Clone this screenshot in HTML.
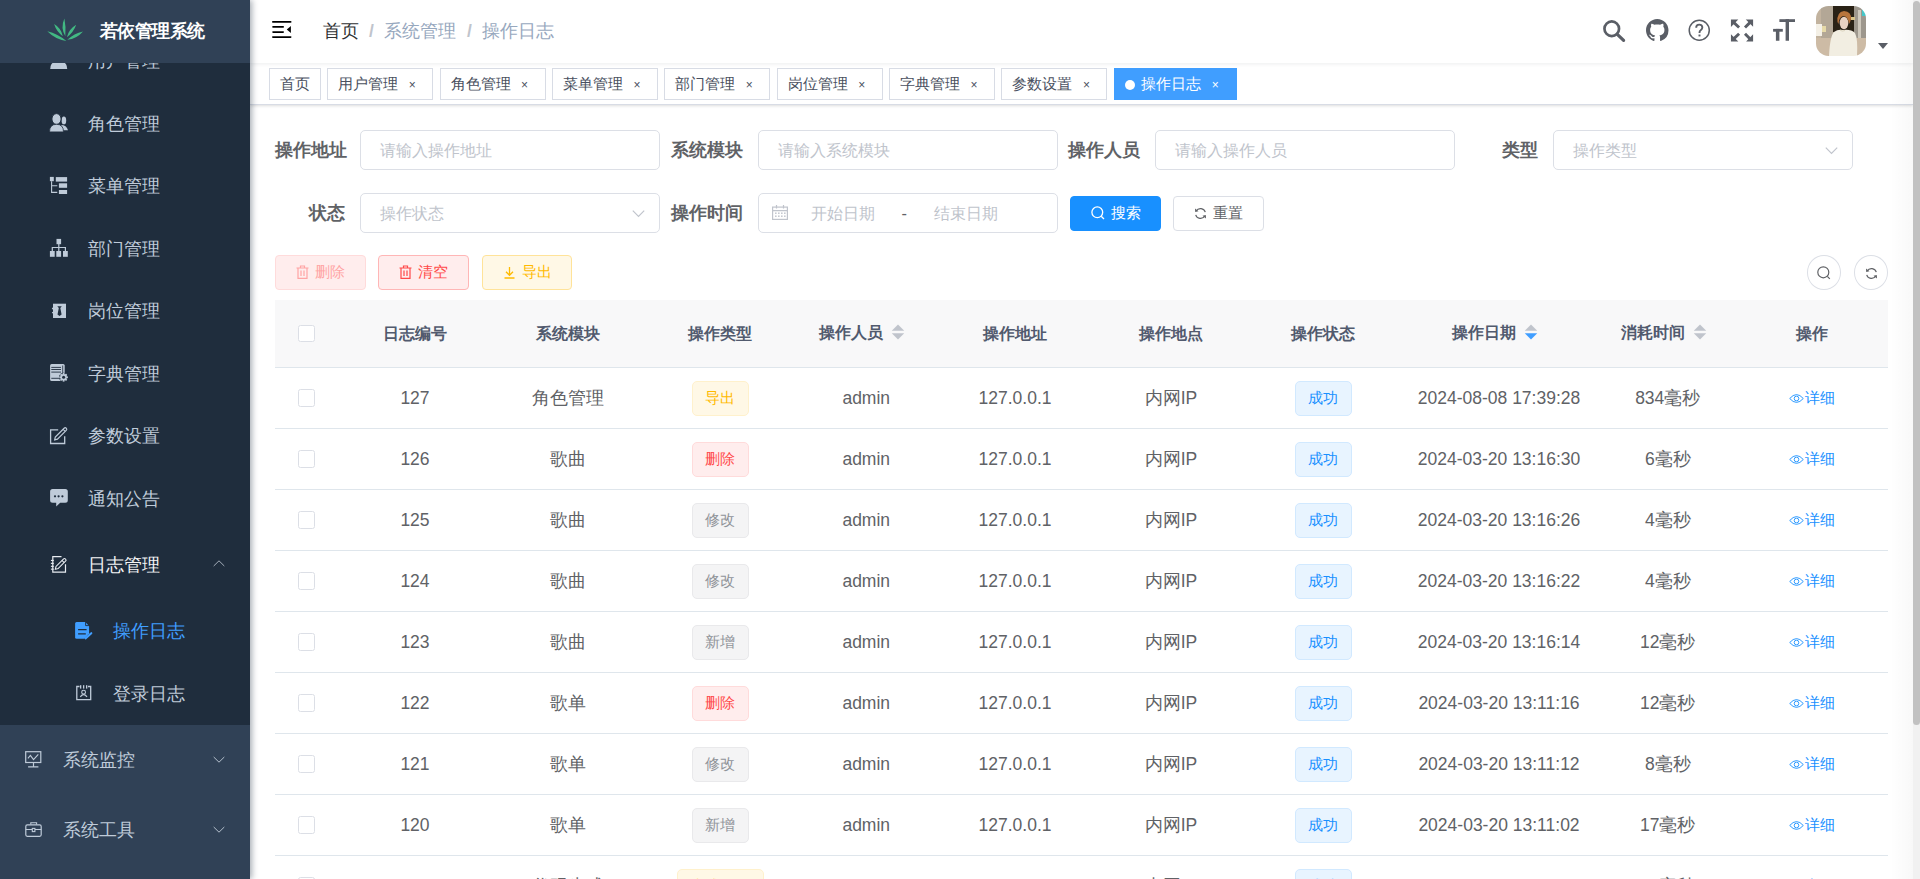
<!DOCTYPE html>
<html><head><meta charset="utf-8">
<style>
*{box-sizing:border-box;margin:0;padding:0}
html,body{width:1920px;height:879px;overflow:hidden;background:#fff;font-family:"Liberation Sans",sans-serif;}
.sidebar{position:absolute;left:0;top:0;width:250px;height:879px;background:#304156;overflow:hidden;z-index:5;box-shadow:2px 0 6px rgba(0,21,41,.35)}
.menu{position:absolute;left:0;top:30px;width:250px}
.sub{background:#1f2d3d}
.mi{position:relative;height:62.5px;display:flex;align-items:center;color:#bfcbd9;font-size:17.5px;white-space:nowrap}
.mi.t{height:70px}

.mi .arr{position:absolute;right:25px;top:50%;width:15px;height:15px;margin-top:-8px}
.l1{padding-left:62.5px}.l2{padding-left:87.5px}.l3{padding-left:112.5px}
.ic{position:absolute}
.logo{position:absolute;left:0;top:0;width:250px;height:62.5px;background:#304156;z-index:2}
.logo .t{position:absolute;left:100px;top:0;line-height:62.5px;color:#fff;font-weight:bold;font-size:17.5px;letter-spacing:-0.6px}
.main{position:absolute;left:250px;top:0;width:1663px;height:879px}
.navbar{position:absolute;left:0;top:0;width:1663px;height:62.5px;background:#fff;box-shadow:0 1px 4px rgba(0,21,41,.08);z-index:3}
.tags{position:absolute;left:0;top:62.5px;width:1663px;height:42.5px;background:#fff;border-bottom:1px solid #d8dce5;box-shadow:0 1px 3px 0 rgba(0,0,0,.12),0 0 3px 0 rgba(0,0,0,.04);z-index:2;white-space:nowrap}
.tag{display:inline-block;position:relative;height:32.5px;line-height:30.5px;border:1px solid #d8dce5;color:#495060;background:#fff;padding:0 10px;font-size:15px;margin-left:6.4px;margin-top:5px;vertical-align:top}
.tag:first-child{margin-left:18.75px}
.tag .x{display:inline-block;width:20px;text-align:center;font-size:12px;margin-left:4px;color:#495060;vertical-align:0}
.tag.active{background:#409eff;border-color:#409eff;color:#fff;padding-right:11px}
.tag.active .x{color:#fff}
.tag.active:before{content:'';display:inline-block;width:10px;height:10px;border-radius:50%;background:#fff;margin-right:6.5px;vertical-align:-1px}
.bc{position:absolute;left:72.5px;top:0;line-height:62.5px;font-size:17.5px;color:#97a8be;white-space:nowrap}
.bc .sep{margin:0 10.5px;color:#c0c4cc;font-weight:bold}
.ri{position:absolute;top:19px;width:22.5px;height:22.5px}
.av{position:absolute;left:1566px;top:5.8px;width:50px;height:50px;border-radius:12.5px;overflow:hidden}
.lbl{position:absolute;height:40px;line-height:40px;font-size:17.5px;font-weight:bold;color:#606266;text-align:right;white-space:nowrap}
.inp{position:absolute;height:40px;width:300px;border:1px solid #dcdfe6;border-radius:5px;background:#fff;font-size:16.25px;line-height:38px;color:#c0c4cc;padding-left:19px;white-space:nowrap}
.chev{position:absolute;right:13px;top:12px;width:15px;height:15px}
.btn{position:absolute;height:34.5px;border-radius:4px;font-size:15px;line-height:32.5px;text-align:center;white-space:nowrap;border:1px solid}
.btn svg{display:inline-block;vertical-align:middle;margin-right:6px;position:relative;top:-1px}
.cb{position:absolute;width:42px;height:34.5px;border-radius:50%;border:1px solid #dcdfe6;background:#fff}
.tbl{position:absolute;left:25px;top:300px;width:1612.5px}
.tr{position:relative;display:flex;height:61px;border-bottom:1px solid #dfe6ec;align-items:center}
.th{height:68px;background:#f8f8f9;color:#515a6e;font-weight:bold;font-size:16.25px}
.c{flex:none;text-align:center;white-space:nowrap;overflow:visible}
.td{color:#606266;font-size:17.5px}
.chk{display:inline-block;width:17.5px;height:17.5px;border:1px solid #dcdfe6;border-radius:2.5px;background:#fff;vertical-align:middle;position:relative;top:-1px}
.tg{display:inline-block;height:35px;line-height:31px;padding:0 12.5px;font-size:15px;border:1px solid;border-radius:5px}
.tg.w{background:#fff8e6;border-color:#fff1cc;color:#ffba00}
.tg.d{background:#ffeded;border-color:#ffdbdb;color:#ff4949}
.tg.i{background:#f4f4f5;border-color:#e9e9eb;color:#909399}
.tg.p{background:#e8f4ff;border-color:#d1e9ff;color:#1890ff}
.lk{color:#1890ff;font-size:15px;position:relative;top:-1px}
.sort{display:inline-block;width:30px;height:42.5px;vertical-align:middle}
.app{position:absolute;left:0;top:0;width:1663px;height:879px}
.shade{position:absolute;left:1890px;top:0;width:23px;height:879px;background:linear-gradient(to right,rgba(0,0,0,0),rgba(0,0,0,.028));z-index:9}
.sbar{position:absolute;left:1913px;top:0;width:7px;height:879px;background:#f1f1f1;z-index:10}
.sbar i{position:absolute;left:0;top:1px;width:7px;height:724px;border-radius:4px;background:#c1c1c1}
</style></head>
<body>
<div class="sidebar">
  <div class="menu">
    <div class="sub">
      <div class="mi l2">用户管理</div>
      <div class="mi l2">角色管理</div>
      <div class="mi l2">菜单管理</div>
      <div class="mi l2">部门管理</div>
      <div class="mi l2">岗位管理</div>
      <div class="mi l2">字典管理</div>
      <div class="mi l2">参数设置</div>
      <div class="mi l2">通知公告</div>
      <div class="mi t l2" style="color:#f4f4f5">日志管理</div>
      <div class="mi l3" style="color:#409eff">操作日志</div>
      <div class="mi l3">登录日志</div>
    </div>
    <div class="mi t l1">系统监控</div>
    <div class="mi t l1">系统工具</div>
  </div>
  <svg class="ic" style="left:40px;top:46px" width="28" height="28" viewBox="0 0 28 28"><circle cx="18.7" cy="10" r="4.5" fill="#bfcbd9"/><path d="M10.2 23 Q10.6 16.5 14 16.5 H23.4 Q26.8 16.5 27.2 23 Z" fill="#bfcbd9"/></svg>
  <svg class="ic" style="left:45px;top:108px" width="28" height="28" viewBox="0 0 28 28"><ellipse cx="18.9" cy="12.4" rx="2.3" ry="3.9" fill="#bfcbd9"/><path d="M16 17 Q21.5 17 23 22.3 L18 22.3Z" fill="#bfcbd9"/><ellipse cx="11.5" cy="11" rx="4.6" ry="5.4" fill="#bfcbd9" stroke="#1f2d3d" stroke-width="1"/><path d="M4.5 23.9 Q4.5 16.3 11.5 16.3 Q18.5 16.3 18.5 23.9 Z" fill="#bfcbd9" stroke="#1f2d3d" stroke-width="0.8"/></svg>
  <svg class="ic" style="left:45px;top:172px" width="28" height="28" viewBox="0 0 28 28"><g fill="#bfcbd9"><rect x="4.9" y="4.9" width="3.9" height="4.3"/><rect x="10.8" y="5.1" width="11.3" height="4.5"/><rect x="13.9" y="11.3" width="8.2" height="4.5"/><rect x="13.9" y="18" width="8.2" height="4"/></g><path d="M6.6 9.2 V20.4 H12.3 M6.6 13.7 H12.3" fill="none" stroke="#bfcbd9" stroke-width="1.1"/></svg>
  <svg class="ic" style="left:45px;top:234px" width="28" height="28" viewBox="0 0 28 28"><g fill="#bfcbd9"><rect x="11.5" y="4.9" width="4.6" height="5.3"/><rect x="4.9" y="17" width="4.8" height="5.8"/><rect x="11.3" y="17" width="4.8" height="5.8"/><rect x="18" y="17" width="4.8" height="5.8"/></g><path d="M13.8 10 V17 M7.3 17.2 V13.5 H20.4 V17.2" fill="none" stroke="#bfcbd9" stroke-width="1.2"/></svg>
  <svg class="ic" style="left:45px;top:297px" width="28" height="28" viewBox="0 0 28 28"><rect x="8" y="6.7" width="13" height="14.3" fill="#bfcbd9"/><g fill="#bfcbd9"><ellipse cx="8.3" cy="11.5" rx="1.4" ry="0.9"/><ellipse cx="8.3" cy="15.6" rx="1.4" ry="0.9"/></g><path d="M12.3 9.2 H16.8 L15.3 11 L16.6 17.4 L14.5 18.9 L12.5 17.4 L13.8 11Z" fill="#1f2d3d"/></svg>
  <svg class="ic" style="left:45px;top:359px" width="28" height="28" viewBox="0 0 28 28"><rect x="5.1" y="5.1" width="14.6" height="16.9" rx="1.5" fill="#bfcbd9"/><path d="M17.7 6.5 V15" stroke="#1f2d3d" stroke-width="0.8"/><g stroke="#1f2d3d" stroke-width="0.9"><path d="M6.3 8.4 H16 M6.3 10.5 H16 M6.3 13.1 H16 M6.3 19.3 H15"/></g><g transform="translate(18.6 18.3)"><circle r="4.6" fill="#1f2d3d"/><circle r="3.2" fill="#bfcbd9"/><g fill="#bfcbd9"><rect x="-0.9" y="-4.3" width="1.8" height="1.8" transform="rotate(0)"/><rect x="-0.9" y="-4.3" width="1.8" height="1.8" transform="rotate(45)"/><rect x="-0.9" y="-4.3" width="1.8" height="1.8" transform="rotate(90)"/><rect x="-0.9" y="-4.3" width="1.8" height="1.8" transform="rotate(135)"/><rect x="-0.9" y="-4.3" width="1.8" height="1.8" transform="rotate(180)"/><rect x="-0.9" y="-4.3" width="1.8" height="1.8" transform="rotate(225)"/><rect x="-0.9" y="-4.3" width="1.8" height="1.8" transform="rotate(270)"/><rect x="-0.9" y="-4.3" width="1.8" height="1.8" transform="rotate(315)"/></g><circle r="1.5" fill="#1f2d3d"/></g></svg>
  <svg class="ic" style="left:45px;top:421px" width="28" height="28" viewBox="0 0 28 28"><path d="M13.2 8.9 H5.6 V22.5 H19.7 V15.3" fill="none" stroke="#bfcbd9" stroke-width="1.3"/><g transform="translate(15.6 12.9) rotate(-45)"><path d="M-8.4 0 L-6 -1.5 H6.5 Q8 -1.5 8 0 Q8 1.5 6.5 1.5 H-6Z" fill="none" stroke="#bfcbd9" stroke-width="1.2"/><path d="M5 -1.5 V1.5" stroke="#bfcbd9" stroke-width="1"/></g></svg>
  <svg class="ic" style="left:45px;top:484px" width="28" height="28" viewBox="0 0 28 28"><path d="M7.6 5.1 H20.3 Q22.8 5.1 22.8 7.6 V16.3 Q22.8 18.8 20.3 18.8 H15.2 L11.2 22.6 L11.2 18.8 H7.6 Q5.1 18.8 5.1 16.3 V7.6 Q5.1 5.1 7.6 5.1Z" fill="#bfcbd9"/><g fill="#1f2d3d"><circle cx="10" cy="12.3" r="1.1"/><circle cx="13.6" cy="12.3" r="1.1"/><circle cx="17.4" cy="12.3" r="1.1"/></g></svg>
  <svg class="ic" style="left:45px;top:551px" width="28" height="28" viewBox="0 0 28 28"><path d="M16.5 5.6 H7.8 V21.1 H20.5 V13.2" fill="none" stroke="#e8ecf1" stroke-width="1.2"/><g fill="#e8ecf1"><rect x="5.9" y="8.9" width="2.9" height="1.1"/><rect x="5.9" y="11.8" width="2.9" height="1.1"/><rect x="5.9" y="14.8" width="2.9" height="1.1"/><rect x="5.9" y="17.6" width="2.9" height="1.1"/></g><g transform="translate(15.6 13) rotate(-45)"><path d="M-7.4 0 L-5 -1.5 H5.8 Q7 -1.5 7 0 Q7 1.5 5.8 1.5 H-5Z" fill="none" stroke="#e8ecf1" stroke-width="1.1"/><path d="M3.5 -1.5 V1.5" stroke="#e8ecf1" stroke-width="1"/></g></svg>
  <svg class="ic" style="left:70px;top:617px" width="28" height="28" viewBox="0 0 28 28"><path d="M6.6 5.1 H15.3 L19.1 8.9 V16.5 L14.2 21.7 H6.6 Q5.1 21.7 5.1 20.2 V6.6 Q5.1 5.1 6.6 5.1Z" fill="#409eff"/><path d="M15.6 5.1 V8.6 H19.1" fill="none" stroke="#1f2d3d" stroke-width="0.9"/><path d="M8.1 12.6 H16.6 M8.1 16.9 H15.8" stroke="#1f2d3d" stroke-width="1.3"/><path d="M15.5 21.4 L21.3 16.2" stroke="#409eff" stroke-width="2.1" stroke-linecap="round"/></svg>
  <svg class="ic" style="left:70px;top:679px" width="28" height="28" viewBox="0 0 28 28"><path d="M9.5 7.5 H6.8 V20.7 H20.7 V7.5 H18" fill="none" stroke="#bfcbd9" stroke-width="1.3"/><g fill="#bfcbd9"><rect x="10" y="6.2" width="1.3" height="3.4"/><rect x="13" y="6.2" width="1.3" height="3.4"/><rect x="16" y="6.2" width="1.3" height="3.4"/></g><circle cx="13.6" cy="13.2" r="1.9" fill="none" stroke="#bfcbd9" stroke-width="1.1"/><path d="M10.3 17.8 Q13.6 13.4 17 17.8" fill="none" stroke="#bfcbd9" stroke-width="1.2"/></svg>
  <svg class="ic" style="left:20px;top:746px" width="28" height="28" viewBox="0 0 28 28"><rect x="5.7" y="5.7" width="15.1" height="10.8" fill="none" stroke="#bfcbd9" stroke-width="1.2"/><path d="M7.9 12.4 L10.4 9.4 L13.5 13.6 L18.3 8.3" fill="none" stroke="#bfcbd9" stroke-width="1.1"/><path d="M13.5 16.5 V20.4 M8.1 20.9 H18.4" fill="none" stroke="#bfcbd9" stroke-width="1.2"/></svg>
  <svg class="ic" style="left:20px;top:816px" width="28" height="28" viewBox="0 0 28 28"><rect x="5.8" y="8.9" width="15.4" height="11.4" rx="1.5" fill="none" stroke="#bfcbd9" stroke-width="1.2"/><path d="M10.8 8.6 V6.8 H16.6 V8.6 M5.8 13.5 H12 M15 13.5 H21.2" fill="none" stroke="#bfcbd9" stroke-width="1.1"/><rect x="12.3" y="12.4" width="2.6" height="3.2" fill="none" stroke="#bfcbd9" stroke-width="1.1"/></svg>
  <svg class="ic" style="left:212.5px;top:560px" width="12" height="7" viewBox="0 0 12 7"><path d="M0.7 6 L6 0.8 L11.3 6" fill="none" stroke="#a3adb9" stroke-width="1"/></svg>
  <svg class="ic" style="left:212.5px;top:755.5px" width="12" height="7" viewBox="0 0 12 7"><path d="M0.7 1 L6 6.2 L11.3 1" fill="none" stroke="#b5c0cd" stroke-width="1"/></svg>
  <svg class="ic" style="left:212.5px;top:825.5px" width="12" height="7" viewBox="0 0 12 7"><path d="M0.7 1 L6 6.2 L11.3 1" fill="none" stroke="#b5c0cd" stroke-width="1"/></svg>
  <div class="logo"><svg style="position:absolute;left:40px;top:10px" width="60" height="40" viewBox="0 0 60 40"><path d="M7.3 21.2 Q15.2 29.3 26.4 30.9 Q17.9 23.9 7.3 21.2Z M14.1 14.1 Q16.4 21.6 22.8 26.2 Q21.1 18.2 14.1 14.1Z M24.4 8.4 Q20.3 17.5 25.3 26.2 Q26.2 17.2 24.4 8.4Z M36.2 14.8 Q28.9 19.0 26.9 27.2 Q33.5 22.5 36.2 14.8Z M43.0 21.4 Q34.0 23.4 27.3 29.8 Q36.8 28.7 43.0 21.4Z" fill="#42b983"/></svg><span class="t">若依管理系统</span></div>
</div>
<div class="main">
  <div class="navbar">
    <svg style="position:absolute;left:22px;top:21px" width="20" height="17" viewBox="0 0 20 17"><g fill="#000"><rect x="0" y="0.1" width="19.5" height="1.7" rx="0.8"/><rect x="0.2" y="5.1" width="11.8" height="1.7" rx="0.8"/><rect x="0.2" y="10.2" width="11.8" height="1.7" rx="0.8"/><rect x="0" y="15.2" width="19.5" height="1.7" rx="0.8"/><path d="M18.9 4.9 L14.8 8.4 L18.9 11.9 Z"/></g></svg>
    <div class="bc"><span style="color:#303133">首页</span><span class="sep">/</span><span>系统管理</span><span class="sep">/</span><span>操作日志</span></div>
    <div class="rm">
      <svg style="position:absolute;left:1353px;top:19px" width="24" height="24" viewBox="0 0 24 24"><circle cx="8.75" cy="9.75" r="7.3" fill="none" stroke="#5a5e66" stroke-width="2.7"/><path d="M14.3 15.3 L20.6 21.4" stroke="#5a5e66" stroke-width="3.2" stroke-linecap="round"/></svg>
      <svg class="ri" style="left:1396px" viewBox="0 0 16 16"><path fill="#5a5e66" d="M8 0C3.58 0 0 3.58 0 8c0 3.54 2.29 6.53 5.47 7.59.4.07.55-.17.55-.38 0-.19-.01-.82-.01-1.49-2.01.37-2.53-.49-2.69-.94-.09-.23-.48-.94-.82-1.13-.28-.15-.68-.52-.01-.53.63-.01 1.08.58 1.23.82.72 1.21 1.87.87 2.33.66.07-.52.28-.87.51-1.07-1.78-.2-3.64-.89-3.64-3.95 0-.87.31-1.59.82-2.15-.08-.2-.36-1.02.08-2.12 0 0 .67-.21 2.2.82.64-.18 1.32-.27 2-.27.68 0 1.36.09 2 .27 1.53-1.04 2.2-.82 2.2-.82.44 1.1.16 1.92.08 2.12.51.56.82 1.27.82 2.15 0 3.07-1.87 3.75-3.65 3.95.29.25.54.73.54 1.48 0 1.07-.01 1.93-.01 2.2 0 .21.15.46.55.38A8.013 8.013 0 0016 8c0-4.42-3.58-8-8-8z"/></svg>
      <svg class="ri" style="left:1438px" viewBox="0 0 24 24"><circle cx="12" cy="12" r="10.7" fill="none" stroke="#5a5e66" stroke-width="1.6"/><path d="M8.7 9.3c0-2 1.4-3.3 3.3-3.3s3.3 1.3 3.3 3.1c0 1.5-.9 2.2-1.8 2.9-.9.6-1.2 1.1-1.2 2.2v.8" fill="none" stroke="#5a5e66" stroke-width="2"/><rect x="11.2" y="16.6" width="2.1" height="2" fill="#5a5e66"/></svg>
      <svg style="position:absolute;left:1480px;top:18.5px" width="24" height="24" viewBox="0 0 24 24"><g fill="#5a5e66"><path d="M0.94 0.38 H8.3 L0.94 8.1Z M23.1 0.38 H15.75 L23.1 7.75Z M0.94 22.6 V15.2 L8.3 22.6Z M23.1 22.6 V15.2 L16.1 22.6Z"/></g><g stroke="#5a5e66" stroke-width="2.9"><path d="M3.1 2.9 L9.1 8.5 M15 8.5 L20.6 2.9 M9.1 14.75 L3.1 20.4 M15 14.75 L20.6 20.4"/></g></svg>
      <svg style="position:absolute;left:1520px;top:18px" width="28" height="24" viewBox="0 0 28 24"><g fill="#5a5e66"><rect x="3.1" y="10.9" width="9.7" height="2.8"/><rect x="5.9" y="10.9" width="3.5" height="11.85"/><rect x="9.4" y="1.2" width="15.6" height="2.8"/><rect x="15.6" y="1.2" width="3.4" height="21.55"/></g></svg>
      <div class="av"><svg width="50" height="50" viewBox="0 0 50 50"><defs><filter id="bl" x="-10%" y="-10%" width="120%" height="120%"><feGaussianBlur stdDeviation="0.7"/></filter></defs><g filter="url(#bl)">
<rect x="-2" y="-2" width="54" height="54" fill="#c2b39f"/>
<rect x="5" y="0" width="13" height="32" fill="#b3a796"/>
<rect x="17" y="-2" width="24" height="28" fill="#2b2219"/>
<rect x="38" y="0" width="14" height="36" fill="#9d978d"/>
<rect x="42" y="4" width="3" height="30" fill="#cfc9bd"/>
<rect x="46" y="3" width="4" height="7" fill="#47c6c8"/>
<rect x="0" y="18" width="6" height="12" fill="#f4f0e6"/>
<rect x="6" y="20" width="4" height="6" fill="#e6d9a8"/>
<rect x="-2" y="32" width="54" height="20" fill="#cdbba5"/>
<rect x="35" y="11" width="4" height="3" fill="#d8c48a"/>
<ellipse cx="28" cy="17" rx="4.3" ry="6.2" fill="#e9d2c3"/>
<path d="M21.5 16 Q20.5 6 28 5 Q35.5 5.5 35 13 Q34 17 33 18 Q32 10 27 10 Q23 11 22.5 18Z" fill="#b8743c"/>
<path d="M13 50 Q14 30 18 26 Q22 23 27 24 Q35 23 39 27 Q42 33 41 50Z" fill="#f2eee2"/>
<path d="M24 24 Q26 26 29 24.5" fill="none" stroke="#ddd5c0" stroke-width="1"/>
</g></svg></div>
      <svg style="position:absolute;left:1628px;top:43px" width="10" height="6" viewBox="0 0 10 6"><path d="M0 0 H10 L5 6Z" fill="#5a5e66"/></svg>
    </div>
  </div>
  <div class="tags"><span class="tag">首页</span><span class="tag">用户管理<span class="x">×</span></span><span class="tag">角色管理<span class="x">×</span></span><span class="tag">菜单管理<span class="x">×</span></span><span class="tag">部门管理<span class="x">×</span></span><span class="tag">岗位管理<span class="x">×</span></span><span class="tag">字典管理<span class="x">×</span></span><span class="tag">参数设置<span class="x">×</span></span><span class="tag active">操作日志<span class="x">×</span></span></div>
  <div class="app">
  <div class="lbl" style="left:25px;top:130px;width:70px">操作地址</div>
  <div class="inp" style="left:110px;top:130px">请输入操作地址</div>
  <div class="lbl" style="left:410px;top:130px;width:82.5px">系统模块</div>
  <div class="inp" style="left:507.5px;top:130px">请输入系统模块</div>
  <div class="lbl" style="left:807.5px;top:130px;width:82.5px">操作人员</div>
  <div class="inp" style="left:905px;top:130px">请输入操作人员</div>
  <div class="lbl" style="left:1205px;top:130px;width:82.5px">类型</div>
  <div class="inp" style="left:1302.5px;top:130px">操作类型<svg class="chev" viewBox="0 0 15 15"><path d="M1.8 4.6 L7.5 10.3 L13.2 4.6" fill="none" stroke="#c0c4cc" stroke-width="1.2"/></svg></div>
  <div class="lbl" style="left:25px;top:192.5px;width:70px">状态</div>
  <div class="inp" style="left:110px;top:192.5px">操作状态<svg class="chev" viewBox="0 0 15 15"><path d="M1.8 4.6 L7.5 10.3 L13.2 4.6" fill="none" stroke="#c0c4cc" stroke-width="1.2"/></svg></div>
  <div class="lbl" style="left:410px;top:192.5px;width:82.5px">操作时间</div>
  <div class="inp" style="left:507.5px;top:192.5px;padding:0">
    <svg style="position:absolute;left:13px;top:11.5px" width="16" height="15" viewBox="0 0 16 15"><g fill="none" stroke="#c0c4cc" stroke-width="1.2"><rect x="0.6" y="2.1" width="14.8" height="12.3"/><path d="M0.6 5.6 H15.4 M4.5 0 V3.5 M11.5 0 V3.5"/></g><g fill="#c0c4cc"><rect x="3" y="7.5" width="1.6" height="1.4"/><rect x="6" y="7.5" width="1.6" height="1.4"/><rect x="9" y="7.5" width="1.6" height="1.4"/><rect x="12" y="7.5" width="1.6" height="1.4"/><rect x="3" y="10.5" width="1.6" height="1.4"/><rect x="6" y="10.5" width="1.6" height="1.4"/><rect x="9" y="10.5" width="1.6" height="1.4"/><rect x="12" y="10.5" width="1.6" height="1.4"/></g></svg>
    <span style="position:absolute;left:52px">开始日期</span><span style="position:absolute;left:143px;color:#606266">-</span><span style="position:absolute;left:175px">结束日期</span>
  </div>
  <div class="btn" style="left:820px;top:196px;width:91px;background:#1890ff;border-color:#1890ff;color:#fff"><svg width="14" height="14" viewBox="0 0 14 14"><circle cx="6.3" cy="6.3" r="5.4" fill="none" stroke="#fff" stroke-width="1.3"/><path d="M10.2 10.2 L13 13" stroke="#fff" stroke-width="1.3"/></svg>搜索</div>
  <div class="btn" style="left:923px;top:196px;width:90.5px;background:#fff;border-color:#dcdfe6;color:#606266"><svg width="13" height="13" viewBox="0 0 13 13"><path d="M11.3 5.2 A5 5 0 0 0 2.2 4" fill="none" stroke="#606266" stroke-width="1.2"/><path d="M1.7 7.8 A5 5 0 0 0 10.8 9" fill="none" stroke="#606266" stroke-width="1.2"/><path d="M1 1.5 L1.2 5 L4.5 4.3Z M12 11.5 L11.8 8 L8.5 8.7Z" fill="#606266"/></svg>重置</div>
  <div class="btn" style="left:25px;top:255px;width:91px;background:#ffeded;border-color:#ffdbdb;color:#ffa4a4"><svg width="13" height="14" viewBox="0 0 13 14"><g fill="none" stroke="#ffa4a4" stroke-width="1.2"><path d="M0.5 3 H12.5 M4.5 3 V1 H8.5 V3 M2 3 V13.4 H11 V3 M5 5.5 V11 M8 5.5 V11"/></g></svg>删除</div>
  <div class="btn" style="left:128px;top:255px;width:91px;background:#ffeded;border-color:#ffb6b6;color:#ff4949"><svg width="13" height="14" viewBox="0 0 13 14"><g fill="none" stroke="#ff4949" stroke-width="1.2"><path d="M0.5 3 H12.5 M4.5 3 V1 H8.5 V3 M2 3 V13.4 H11 V3 M5 5.5 V11 M8 5.5 V11"/></g></svg>清空</div>
  <div class="btn" style="left:232px;top:255px;width:90px;background:#fff8e6;border-color:#ffe399;color:#ffba00"><svg width="13" height="13" viewBox="0 0 13 13"><path d="M6.5 1 V9 M3 5.8 L6.5 9.3 L10 5.8 M1.5 12 H11.5" fill="none" stroke="#ffba00" stroke-width="1.3"/></svg>导出</div>
  <div class="cb" style="left:1557px;top:255px;width:34px;height:34.5px"><svg style="position:absolute;left:9px;top:10px" width="14" height="14" viewBox="0 0 14 14"><circle cx="6.3" cy="6.3" r="5.5" fill="none" stroke="#606266" stroke-width="1.2"/><path d="M10.3 10.3 L12.8 12.8" stroke="#606266" stroke-width="1.2"/></svg></div>
  <div class="cb" style="left:1604px;top:255px;width:34px;height:34.5px"><svg style="position:absolute;left:10px;top:10.5px" width="13" height="13" viewBox="0 0 13 13"><path d="M11.3 5.2 A5 5 0 0 0 2.2 4" fill="none" stroke="#606266" stroke-width="1.2"/><path d="M1.7 7.8 A5 5 0 0 0 10.8 9" fill="none" stroke="#606266" stroke-width="1.2"/><path d="M1 1.5 L1.2 5 L4.5 4.3Z M12 11.5 L11.8 8 L8.5 8.7Z" fill="#606266"/></svg></div>
  <div class="tbl"><div class="tr th"><div class="c" style="width:62.5px"><span class="chk"></span></div><div class="c" style="width:155px">日志编号</div><div class="c" style="width:150px">系统模块</div><div class="c" style="width:155px">操作类型</div><div class="c" style="width:137.5px">操作人员<svg class="sort" viewBox="0 0 30 42.5"><path d="M8.75 18.75 L15 12.5 L21.25 18.75Z" fill="#c0c4cc"/><path d="M8.75 21.25 L15 27.5 L21.25 21.25Z" fill="#c0c4cc"/></svg></div><div class="c" style="width:160px">操作地址</div><div class="c" style="width:152px">操作地点</div><div class="c" style="width:152px">操作状态</div><div class="c" style="width:200px">操作日期<svg class="sort" viewBox="0 0 30 42.5"><path d="M8.75 18.75 L15 12.5 L21.25 18.75Z" fill="#c0c4cc"/><path d="M8.75 21.25 L15 27.5 L21.25 21.25Z" fill="#409eff"/></svg></div><div class="c" style="width:137.5px">消耗时间<svg class="sort" viewBox="0 0 30 42.5"><path d="M8.75 18.75 L15 12.5 L21.25 18.75Z" fill="#c0c4cc"/><path d="M8.75 21.25 L15 27.5 L21.25 21.25Z" fill="#c0c4cc"/></svg></div><div class="c" style="width:151px">操作</div></div><div class="tr td"><div class="c" style="width:62.5px"><span class="chk"></span></div><div class="c" style="width:155px">127</div><div class="c" style="width:150px">角色管理</div><div class="c" style="width:155px"><span class="tg w">导出</span></div><div class="c" style="width:137.5px">admin</div><div class="c" style="width:160px">127.0.0.1</div><div class="c" style="width:152px">内网IP</div><div class="c" style="width:152px"><span class="tg p">成功</span></div><div class="c" style="width:200px">2024-08-08 17:39:28</div><div class="c" style="width:137.5px">834毫秒</div><div class="c" style="width:151px"><span class="lk"><svg width="15" height="11" viewBox="0 0 15 11" style="vertical-align:-1px;margin-right:1px"><path d="M0.7 5.5 Q7.5 -2.3 14.3 5.5 Q7.5 13.3 0.7 5.5Z" fill="none" stroke="#1890ff" stroke-width="0.9"/><circle cx="7.5" cy="5.5" r="2.3" fill="none" stroke="#1890ff" stroke-width="0.9"/></svg>详细</span></div></div><div class="tr td"><div class="c" style="width:62.5px"><span class="chk"></span></div><div class="c" style="width:155px">126</div><div class="c" style="width:150px">歌曲</div><div class="c" style="width:155px"><span class="tg d">删除</span></div><div class="c" style="width:137.5px">admin</div><div class="c" style="width:160px">127.0.0.1</div><div class="c" style="width:152px">内网IP</div><div class="c" style="width:152px"><span class="tg p">成功</span></div><div class="c" style="width:200px">2024-03-20 13:16:30</div><div class="c" style="width:137.5px">6毫秒</div><div class="c" style="width:151px"><span class="lk"><svg width="15" height="11" viewBox="0 0 15 11" style="vertical-align:-1px;margin-right:1px"><path d="M0.7 5.5 Q7.5 -2.3 14.3 5.5 Q7.5 13.3 0.7 5.5Z" fill="none" stroke="#1890ff" stroke-width="0.9"/><circle cx="7.5" cy="5.5" r="2.3" fill="none" stroke="#1890ff" stroke-width="0.9"/></svg>详细</span></div></div><div class="tr td"><div class="c" style="width:62.5px"><span class="chk"></span></div><div class="c" style="width:155px">125</div><div class="c" style="width:150px">歌曲</div><div class="c" style="width:155px"><span class="tg i">修改</span></div><div class="c" style="width:137.5px">admin</div><div class="c" style="width:160px">127.0.0.1</div><div class="c" style="width:152px">内网IP</div><div class="c" style="width:152px"><span class="tg p">成功</span></div><div class="c" style="width:200px">2024-03-20 13:16:26</div><div class="c" style="width:137.5px">4毫秒</div><div class="c" style="width:151px"><span class="lk"><svg width="15" height="11" viewBox="0 0 15 11" style="vertical-align:-1px;margin-right:1px"><path d="M0.7 5.5 Q7.5 -2.3 14.3 5.5 Q7.5 13.3 0.7 5.5Z" fill="none" stroke="#1890ff" stroke-width="0.9"/><circle cx="7.5" cy="5.5" r="2.3" fill="none" stroke="#1890ff" stroke-width="0.9"/></svg>详细</span></div></div><div class="tr td"><div class="c" style="width:62.5px"><span class="chk"></span></div><div class="c" style="width:155px">124</div><div class="c" style="width:150px">歌曲</div><div class="c" style="width:155px"><span class="tg i">修改</span></div><div class="c" style="width:137.5px">admin</div><div class="c" style="width:160px">127.0.0.1</div><div class="c" style="width:152px">内网IP</div><div class="c" style="width:152px"><span class="tg p">成功</span></div><div class="c" style="width:200px">2024-03-20 13:16:22</div><div class="c" style="width:137.5px">4毫秒</div><div class="c" style="width:151px"><span class="lk"><svg width="15" height="11" viewBox="0 0 15 11" style="vertical-align:-1px;margin-right:1px"><path d="M0.7 5.5 Q7.5 -2.3 14.3 5.5 Q7.5 13.3 0.7 5.5Z" fill="none" stroke="#1890ff" stroke-width="0.9"/><circle cx="7.5" cy="5.5" r="2.3" fill="none" stroke="#1890ff" stroke-width="0.9"/></svg>详细</span></div></div><div class="tr td"><div class="c" style="width:62.5px"><span class="chk"></span></div><div class="c" style="width:155px">123</div><div class="c" style="width:150px">歌曲</div><div class="c" style="width:155px"><span class="tg i">新增</span></div><div class="c" style="width:137.5px">admin</div><div class="c" style="width:160px">127.0.0.1</div><div class="c" style="width:152px">内网IP</div><div class="c" style="width:152px"><span class="tg p">成功</span></div><div class="c" style="width:200px">2024-03-20 13:16:14</div><div class="c" style="width:137.5px">12毫秒</div><div class="c" style="width:151px"><span class="lk"><svg width="15" height="11" viewBox="0 0 15 11" style="vertical-align:-1px;margin-right:1px"><path d="M0.7 5.5 Q7.5 -2.3 14.3 5.5 Q7.5 13.3 0.7 5.5Z" fill="none" stroke="#1890ff" stroke-width="0.9"/><circle cx="7.5" cy="5.5" r="2.3" fill="none" stroke="#1890ff" stroke-width="0.9"/></svg>详细</span></div></div><div class="tr td"><div class="c" style="width:62.5px"><span class="chk"></span></div><div class="c" style="width:155px">122</div><div class="c" style="width:150px">歌单</div><div class="c" style="width:155px"><span class="tg d">删除</span></div><div class="c" style="width:137.5px">admin</div><div class="c" style="width:160px">127.0.0.1</div><div class="c" style="width:152px">内网IP</div><div class="c" style="width:152px"><span class="tg p">成功</span></div><div class="c" style="width:200px">2024-03-20 13:11:16</div><div class="c" style="width:137.5px">12毫秒</div><div class="c" style="width:151px"><span class="lk"><svg width="15" height="11" viewBox="0 0 15 11" style="vertical-align:-1px;margin-right:1px"><path d="M0.7 5.5 Q7.5 -2.3 14.3 5.5 Q7.5 13.3 0.7 5.5Z" fill="none" stroke="#1890ff" stroke-width="0.9"/><circle cx="7.5" cy="5.5" r="2.3" fill="none" stroke="#1890ff" stroke-width="0.9"/></svg>详细</span></div></div><div class="tr td"><div class="c" style="width:62.5px"><span class="chk"></span></div><div class="c" style="width:155px">121</div><div class="c" style="width:150px">歌单</div><div class="c" style="width:155px"><span class="tg i">修改</span></div><div class="c" style="width:137.5px">admin</div><div class="c" style="width:160px">127.0.0.1</div><div class="c" style="width:152px">内网IP</div><div class="c" style="width:152px"><span class="tg p">成功</span></div><div class="c" style="width:200px">2024-03-20 13:11:12</div><div class="c" style="width:137.5px">8毫秒</div><div class="c" style="width:151px"><span class="lk"><svg width="15" height="11" viewBox="0 0 15 11" style="vertical-align:-1px;margin-right:1px"><path d="M0.7 5.5 Q7.5 -2.3 14.3 5.5 Q7.5 13.3 0.7 5.5Z" fill="none" stroke="#1890ff" stroke-width="0.9"/><circle cx="7.5" cy="5.5" r="2.3" fill="none" stroke="#1890ff" stroke-width="0.9"/></svg>详细</span></div></div><div class="tr td"><div class="c" style="width:62.5px"><span class="chk"></span></div><div class="c" style="width:155px">120</div><div class="c" style="width:150px">歌单</div><div class="c" style="width:155px"><span class="tg i">新增</span></div><div class="c" style="width:137.5px">admin</div><div class="c" style="width:160px">127.0.0.1</div><div class="c" style="width:152px">内网IP</div><div class="c" style="width:152px"><span class="tg p">成功</span></div><div class="c" style="width:200px">2024-03-20 13:11:02</div><div class="c" style="width:137.5px">17毫秒</div><div class="c" style="width:151px"><span class="lk"><svg width="15" height="11" viewBox="0 0 15 11" style="vertical-align:-1px;margin-right:1px"><path d="M0.7 5.5 Q7.5 -2.3 14.3 5.5 Q7.5 13.3 0.7 5.5Z" fill="none" stroke="#1890ff" stroke-width="0.9"/><circle cx="7.5" cy="5.5" r="2.3" fill="none" stroke="#1890ff" stroke-width="0.9"/></svg>详细</span></div></div><div class="tr td"><div class="c" style="width:62.5px"><span class="chk"></span></div><div class="c" style="width:155px">119</div><div class="c" style="width:150px">代码生成</div><div class="c" style="width:155px"><span class="tg w">生成代码</span></div><div class="c" style="width:137.5px">admin</div><div class="c" style="width:160px">127.0.0.1</div><div class="c" style="width:152px">内网IP</div><div class="c" style="width:152px"><span class="tg p">成功</span></div><div class="c" style="width:200px">2024-03-20 12:59:43</div><div class="c" style="width:137.5px">31毫秒</div><div class="c" style="width:151px"><span class="lk"><svg width="15" height="11" viewBox="0 0 15 11" style="vertical-align:-1px;margin-right:1px"><path d="M0.7 5.5 Q7.5 -2.3 14.3 5.5 Q7.5 13.3 0.7 5.5Z" fill="none" stroke="#1890ff" stroke-width="0.9"/><circle cx="7.5" cy="5.5" r="2.3" fill="none" stroke="#1890ff" stroke-width="0.9"/></svg>详细</span></div></div></div>
</div>
</div>
<div class="shade"></div><div class="sbar"><i></i></div>
</body></html>
